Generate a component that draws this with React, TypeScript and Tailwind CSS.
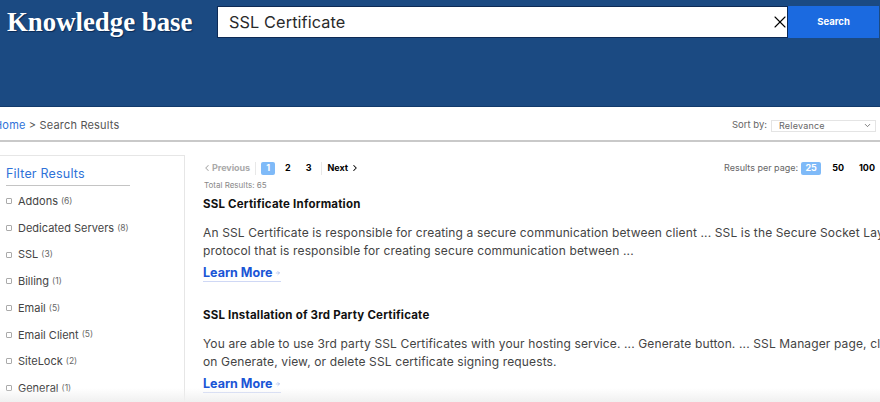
import { X, ChevronLeft, ChevronRight, ChevronDown, ArrowRight } from "lucide-react";

const filters = [
  { name: "Addons", count: 6 },
  { name: "Dedicated Servers", count: 8 },
  { name: "SSL", count: 3 },
  { name: "Billing", count: 1 },
  { name: "Email", count: 5 },
  { name: "Email Client", count: 5 },
  { name: "SiteLock", count: 2 },
  { name: "General", count: 1 },
];

const results = [
  {
    title: "SSL Certificate Information",
    lines: [
      "An SSL Certificate is responsible for creating a secure communication between client ... SSL is the Secure Socket Layer",
      "protocol that is responsible for creating secure communication between ...",
    ],
  },
  {
    title: "SSL Installation of 3rd Party Certificate",
    lines: [
      "You are able to use 3rd party SSL Certificates with your hosting service. ... Generate button. ... SSL Manager page, click",
      "on Generate, view, or delete SSL certificate signing requests.",
    ],
  },
];

const App = () => {
  return (
    <div className="relative h-[402px] w-[880px] overflow-hidden bg-white font-['Inter',sans-serif]">
      <header className="h-[107px] border-b border-[#123a6b] bg-[#1b4a82]">
        <div className="flex items-start pl-[7px] pt-[6px]">
          <h1 className="w-[210px] shrink-0 font-['Liberation_Serif',serif] text-[26.8px] leading-[32px] font-bold text-white [text-shadow:1px_1px_1px_#0b2a55]">
            Knowledge base
          </h1>
          <div className="flex h-[32px] w-[571px] items-center border border-[#0d2a55] bg-white pl-[11px]">
            <span className="flex-1 text-[16.3px] tracking-[0.1px] text-[#2a2a2a]">SSL Certificate</span>
            <X className="mr-[-3px] h-[20px] w-[20px] text-black" strokeWidth={1.3} />
          </div>
          <button className="flex h-[32px] w-[91px] items-center justify-center bg-[#1b6ae0] text-[9.5px] font-bold text-white">
            Search
          </button>
        </div>
      </header>

      <div className="flex h-[35px] items-center justify-between border-b-2 border-[#c9c9c9] pr-[4px] pt-[4px]">
        <div className="ml-[-6px] text-[11px] tracking-[0.18px] text-[#555]">
          <a className="text-[#2f72d8]">Home</a> &gt; Search Results
        </div>
        <div className="flex items-center gap-[4px]">
          <span className="text-[9.5px] text-[#666]">Sort by:</span>
          <div className="flex h-[12px] w-[105px] items-center justify-between border border-[#e4e4e4] pl-[7px] pr-[3px] text-[9px] tracking-[0.2px] text-[#666]">
            Relevance
            <ChevronDown className="h-[9px] w-[9px] text-[#555]" />
          </div>
        </div>
      </div>

      <div className="flex pt-[13px]">
        <aside className="h-[260px] w-[185px] shrink-0 border-t border-r border-[#e6e6e6] pl-[6px] pt-[9px]">
          <h2 className="w-[124px] border-b border-[#c4c4c4] pb-[3px] text-[12.5px] leading-[17px] tracking-[0.2px] text-[#2f72d8]">
            Filter Results
          </h2>
          <ul className="mt-[2px] flex flex-col">
            {filters.map((f) => (
              <li key={f.name} className="flex h-[26.7px] items-center text-[11px] text-[#444]">
                <span className="mr-[6px] h-[6px] w-[6px] rounded-[1px] border border-[#aaa]" />
                <span>{f.name}</span>
                <span className="ml-[3px] text-[8.5px] text-[#666]">({f.count})</span>
              </li>
            ))}
          </ul>
        </aside>

        <main className="min-w-0 flex-1 pl-[18px] pt-[5px]">
          <div className="flex h-[16px] items-center justify-between pr-[5px]">
            <div className="flex items-center text-[9px] font-bold tracking-[-0.05px]">
              <ChevronLeft className="ml-[-1px] h-[10px] w-[10px] text-[#aaa]" strokeWidth={2.5} />
              <span className="text-[#aaa]">Previous</span>
              <span className="ml-[5px] h-[13px] w-px bg-[#e8e8e8]" />
              <span className="ml-[5px] flex h-[13px] w-[14px] items-center justify-center rounded-[2px] bg-[#7fbaf8] text-white">1</span>
              <span className="ml-[10px] text-black">2</span>
              <span className="ml-[15px] text-black">3</span>
              <span className="ml-[10px] h-[13px] w-px bg-[#e8e8e8]" />
              <span className="ml-[5px] text-black">Next</span>
              <ChevronRight className="ml-[2px] h-[10px] w-[10px] text-black" strokeWidth={2.5} />
            </div>
            <div className="flex items-center text-[9px]">
              <span className="text-[#666]">Results per page:</span>
              <span className="ml-[3px] flex h-[13px] w-[20px] items-center justify-center rounded-[2px] bg-[#7fbaf8] font-bold text-white">25</span>
              <span className="ml-[11px] font-bold text-black">50</span>
              <span className="ml-[15px] font-bold text-black">100</span>
            </div>
          </div>
          <div className="ml-[1px] mt-[4px] text-[8px] leading-[11px] text-[#888]">Total Results: 65</div>

          {results.map((r) => (
            <article key={r.title} className="mb-[25px] mt-[5px] whitespace-nowrap">
              <h3 className="text-[11.5px] leading-[16px] font-bold tracking-[0.2px] text-[#111]">{r.title}</h3>
              <div className="mt-[12px] text-[12px] leading-[18px] tracking-[0.13px] text-[#444]">
                {r.lines.map((l) => (
                  <p key={l}>{l}</p>
                ))}
              </div>
              <a className="mt-[4px] flex w-[78px] items-center gap-[3px] border-b border-[#cfd8f5] text-[12.5px] leading-[17px] font-bold text-[#1a55d6]">
                Learn More
                <ArrowRight className="h-[8px] w-[8px] text-[#7f9be0]" />
              </a>
            </article>
          ))}
        </main>
      </div>

      <div className="pointer-events-none absolute inset-x-0 bottom-0 h-[14px] bg-gradient-to-b from-transparent to-[#f0f0f0]" />
    </div>
  );
};

export default App;
